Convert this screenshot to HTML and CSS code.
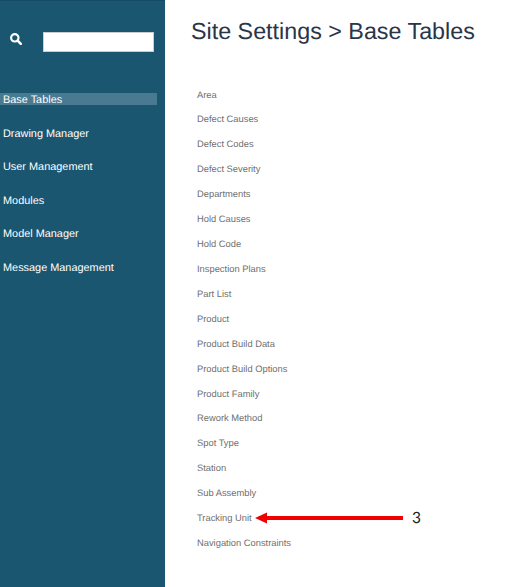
FILE: index.html
```html
<!DOCTYPE html>
<html lang="en">
<head>
    <meta charset="UTF-8">
    <title>Base Tables</title>
    <link rel="stylesheet" href="styles.css">
</head>
<body>
    <div class="page">
        <div class="sidebar">
            <div class="search">
                <svg class="search-icon" width="12" height="12" viewBox="0 0 12 12">
                    <circle cx="4.8" cy="4.8" r="3.7" fill="none" stroke="#fff" stroke-width="2.2"/>
                    <path d="M7.6 7.6 L10.8 10.8" stroke="#fff" stroke-width="2.6" stroke-linecap="round"/>
                </svg>
                <input type="text" class="search-input">
            </div>
            <ul class="nav">
                <li class="nav-item active">Base Tables</li>
                <li class="nav-item">Drawing Manager</li>
                <li class="nav-item">User Management</li>
                <li class="nav-item">Modules</li>
                <li class="nav-item">Model Manager</li>
                <li class="nav-item">Message Management</li>
            </ul>
        </div>
        <div class="content">
            <h1 class="title">Site Settings &gt; Base Tables</h1>
            <ul class="tables">
                <li>Area</li>
                <li>Defect Causes</li>
                <li>Defect Codes</li>
                <li>Defect Severity</li>
                <li>Departments</li>
                <li>Hold Causes</li>
                <li>Hold Code</li>
                <li>Inspection Plans</li>
                <li>Part List</li>
                <li>Product</li>
                <li>Product Build Data</li>
                <li>Product Build Options</li>
                <li>Product Family</li>
                <li>Rework Method</li>
                <li>Spot Type</li>
                <li>Station</li>
                <li>Sub Assembly</li>
                <li>Tracking Unit</li>
                <li>Navigation Constraints</li>
            </ul>
        </div>
        <svg class="arrow" width="150" height="14" viewBox="0 0 150 14">
            <path d="M0 7 L12 1.5 L12 5 L148 5 L148 9 L12 9 L12 12.5 Z" fill="#f00000"/>
        </svg>
        <span class="callout">3</span>
    </div>
</body>
</html>
```

FILE: styles.css
```css
* {
    box-sizing: border-box;
}
body {
    margin: 0;
    font-family: "Liberation Sans", Arial, sans-serif;
    background: #fff;
    text-rendering: geometricPrecision;
}
ul {
    list-style-type: none;
    margin: 0;
    padding: 0;
}
.page {
    position: relative;
    display: flex;
    width: 531px;
    height: 587px;
    overflow: hidden;
}
.sidebar {
    width: 165px;
    flex-shrink: 0;
    background: #1a5670;
    border-top: 1px solid #154c64;
    padding-top: 31px;
}
.search {
    display: flex;
    align-items: center;
    padding-left: 10px;
    height: 20px;
}
.search-icon {
    margin-top: -6px;
}
.search-input {
    width: 111px;
    height: 20px;
    margin-left: 21px;
    padding: 0;
    border: 1px solid #ccc;
    background: #fff;
}
.nav {
    margin-top: 41px;
}
.nav-item {
    width: 157px;
    height: 12px;
    margin-bottom: 21.5px;
    padding: 1px 0 0 3px;
    font-size: 10.9px;
    line-height: 12px;
    color: #fff;
}
.active {
    background: #4a7a91;
}
.content {
    flex: 1;
    padding: 0 0 0 26px;
}
.title {
    margin: 17px 0 0;
    font-size: 23.3px;
    line-height: 28px;
    font-weight: 400;
    color: #2a3547;
    white-space: nowrap;
}
.tables {
    margin-top: 37.5px;
    padding-left: 6px;
}
.tables li {
    height: 24.93px;
    font-size: 9.35px;
    line-height: 24.93px;
    color: #6f6f6f;
}
.arrow {
    position: absolute;
    left: 255px;
    top: 511px;
}
.callout {
    position: absolute;
    left: 412px;
    top: 508px;
    font-family: Lato, sans-serif;
    font-size: 15.5px;
    font-weight: 400;
    line-height: 20px;
    color: #222;
}
```
